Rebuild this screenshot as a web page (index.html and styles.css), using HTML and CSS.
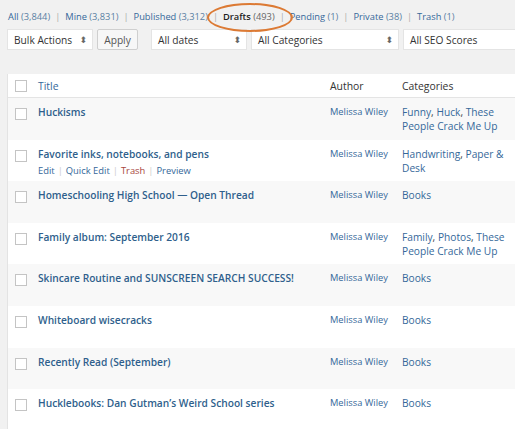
FILE: index.html
```html
<!DOCTYPE html>
<html>
<head>
<meta charset="utf-8">
<link rel="stylesheet" href="styles.css">
</head>
<body>
<div class="wrap">
  <ul class="subsubsub">
    <li><a href="#">All <span class="count">(3,844)</span></a><span class="sep">|</span></li>
    <li><a href="#">Mine <span class="count">(3,831)</span></a><span class="sep">|</span></li>
    <li><a href="#">Published <span class="count">(3,312)</span></a><span class="sep">|</span></li>
    <li><a href="#" class="current">Drafts <span class="count">(493)</span></a><span class="sep">|</span></li>
    <li><a href="#">Pending <span class="count">(1)</span></a><span class="sep">|</span></li>
    <li><a href="#">Private <span class="count">(38)</span></a><span class="sep">|</span></li>
    <li><a href="#">Trash <span class="count">(1)</span></a></li>
  </ul>
  <div class="highlight"></div>

  <div class="tablenav">
    <div class="select w-bulk">Bulk Actions<span class="arrows">&#11021;</span></div>
    <div class="button">Apply</div>
    <div class="select w-dates">All dates<span class="arrows">&#11021;</span></div>
    <div class="select w-cats">All Categories<span class="arrows">&#11021;</span></div>
    <div class="select w-seo">All SEO Scores</div>
  </div>

  <div class="table">
    <div class="row head">
      <div class="cell cb"><span class="box"></span></div>
      <div class="cell title"><a href="#" class="sort">Title</a></div>
      <div class="cell author">Author</div>
      <div class="cell cats">Categories</div>
    </div>
    <div class="row alt">
      <div class="cell cb"><span class="box"></span></div>
      <div class="cell title"><a href="#" class="post">Huckisms</a></div>
      <div class="cell author"><a href="#">Melissa Wiley</a></div>
      <div class="cell cats"><a href="#">Funny</a>, <a href="#">Huck</a>, <a href="#">These People Crack Me Up</a></div>
    </div>
    <div class="row">
      <div class="cell cb"><span class="box"></span></div>
      <div class="cell title"><a href="#" class="post">Favorite inks, notebooks, and pens</a>
        <div class="actions"><a href="#">Edit</a><span class="bar">|</span><a href="#">Quick Edit</a><span class="bar">|</span><a href="#" class="trash">Trash</a><span class="bar">|</span><a href="#">Preview</a></div>
      </div>
      <div class="cell author"><a href="#">Melissa Wiley</a></div>
      <div class="cell cats"><a href="#">Handwriting</a>, <a href="#">Paper &amp; Desk</a></div>
    </div>
    <div class="row alt">
      <div class="cell cb"><span class="box"></span></div>
      <div class="cell title"><a href="#" class="post">Homeschooling High School — Open Thread</a></div>
      <div class="cell author"><a href="#">Melissa Wiley</a></div>
      <div class="cell cats"><a href="#">Books</a></div>
    </div>
    <div class="row">
      <div class="cell cb"><span class="box"></span></div>
      <div class="cell title"><a href="#" class="post">Family album: September 2016</a></div>
      <div class="cell author"><a href="#">Melissa Wiley</a></div>
      <div class="cell cats"><a href="#">Family</a>, <a href="#">Photos</a>, <a href="#">These People Crack Me Up</a></div>
    </div>
    <div class="row alt">
      <div class="cell cb"><span class="box"></span></div>
      <div class="cell title"><a href="#" class="post">Skincare Routine and SUNSCREEN SEARCH SUCCESS!</a></div>
      <div class="cell author"><a href="#">Melissa Wiley</a></div>
      <div class="cell cats"><a href="#">Books</a></div>
    </div>
    <div class="row">
      <div class="cell cb"><span class="box"></span></div>
      <div class="cell title"><a href="#" class="post">Whiteboard wisecracks</a></div>
      <div class="cell author"><a href="#">Melissa Wiley</a></div>
      <div class="cell cats"><a href="#">Books</a></div>
    </div>
    <div class="row alt">
      <div class="cell cb"><span class="box"></span></div>
      <div class="cell title"><a href="#" class="post">Recently Read (September)</a></div>
      <div class="cell author"><a href="#">Melissa Wiley</a></div>
      <div class="cell cats"><a href="#">Books</a></div>
    </div>
    <div class="row">
      <div class="cell cb"><span class="box"></span></div>
      <div class="cell title"><a href="#" class="post">Hucklebooks: Dan Gutman’s Weird School series</a></div>
      <div class="cell author"><a href="#">Melissa Wiley</a></div>
      <div class="cell cats"><a href="#">Books</a></div>
    </div>
  </div>
</div>
</body>
</html>
```
FILE: styles.css
```css
html, body {
  margin: 0;
  padding: 0;
  background: #f1f1f1;
  overflow: hidden;
  width: 515px;
  height: 429px;
}
body {
  font-family: "Open Sans", "DejaVu Sans", sans-serif;
  font-size: 10.5px;
  color: #444;
}
a {
  color: #35689a;
  text-decoration: none;
}
.wrap {
  position: relative;
  padding-left: 7px;
}
.subsubsub {
  list-style: none;
  margin: 0;
  padding: 10px 0 0 1px;
  height: 19px;
  display: flex;
  font-size: 9.3px;
  line-height: 14px;
  white-space: nowrap;
}
.subsubsub .count {
  color: #5a7fa3;
}
.subsubsub .current {
  color: #222;
  font-weight: 600;
}
.subsubsub .current .count {
  color: #666;
  font-weight: 400;
}
.sep {
  color: #aaa;
  padding: 0 5px;
}
.highlight {
  position: absolute;
  left: 207px;
  top: 3px;
  width: 82px;
  height: 25px;
  border: 2.5px solid #dc7a34;
  border-radius: 50%;
}
.tablenav {
  display: flex;
  align-items: center;
  height: 21px;
  white-space: nowrap;
}
.tablenav > div {
  flex-shrink: 0;
}
.select {
  box-sizing: border-box;
  height: 21px;
  background: #fff;
  border: 1px solid #e4e4e4;
  display: flex;
  align-items: center;
  justify-content: space-between;
  padding: 0 5px 0 6px;
  font-size: 10.2px;
  color: #333;
}
.arrows {
  font-size: 9px;
  color: #666;
}
.w-bulk { width: 86px; margin-right: 4px; }
.w-dates { width: 96px; margin-left: 13px; margin-right: 4px; }
.w-cats { width: 148px; margin-right: 4px; }
.w-seo { width: 130px; }
.button {
  box-sizing: border-box;
  height: 21px;
  width: 41px;
  background: #f7f7f7;
  border: 1px solid #cfcfcf;
  border-radius: 2px;
  display: flex;
  align-items: center;
  justify-content: center;
  font-size: 10.2px;
  color: #555;
}
.table {
  margin-top: 24px;
  background: #fff;
  border-left: 1px solid #e3e3e3;
  width: 520px;
}
.row {
  display: grid;
  grid-template-columns: 23px 292px 72px 130px;
  height: 41.6px;
  box-sizing: border-box;
  background: #fff;
}
.row.alt {
  background: #f8f8f8;
}
.row.head {
  height: 24px;
  border-bottom: 1px solid #e4e4e4;
  background: #fff;
}
.cell {
  padding: 7px 7px 0 7px;
  line-height: 14px;
  font-size: 10.2px;
}
.cell.cb {
  padding: 10px 0 0 7px;
}
.cell.author {
  white-space: nowrap;
  font-size: 9.3px;
}
.cell.cats {
  padding-right: 17px;
}
.head .cell {
  padding-top: 5px;
  color: #333;
  font-size: 10.4px;
}
.head .cell.cb {
  padding-top: 6px;
}
.box {
  display: block;
  width: 10px;
  height: 10px;
  border: 1px solid #c4c4c4;
  background: #fff;
}
.sort {
  color: #35689a;
}
.post {
  font-weight: 600;
  color: #2f5f8c;
}
.actions {
  font-size: 9.4px;
  line-height: 17px;
  margin-top: 1px;
}
.actions .bar {
  color: #ccc;
  padding: 0 3px;
}
.actions .trash {
  color: #a8453d;
}
```
